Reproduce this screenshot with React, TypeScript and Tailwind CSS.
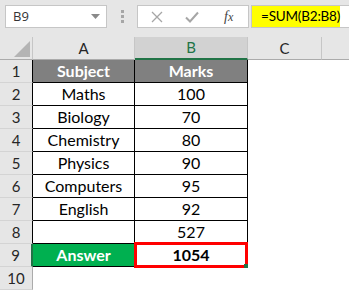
import React from 'react';

const rows = [
    { a: 'Subject', b: 'Marks' },
    { a: 'Maths', b: '100' },
    { a: 'Biology', b: '70' },
    { a: 'Chemistry', b: '80' },
    { a: 'Physics', b: '90' },
    { a: 'Computers', b: '95' },
    { a: 'English', b: '92' },
    { a: '', b: '527' },
    { a: 'Answer', b: '1054' },
];

const rowHead = 'h-[23px] flex items-center justify-center text-[15px] text-[#262626] bg-[#e6e6e6] border-b border-b-[#d4d4d4]';

const App: React.FC = () => {
    return (
        <div className="w-[349px] h-[290px] overflow-hidden bg-[#e6e6e6] font-['Lato',sans-serif]">
            {/* Name box + formula bar */}
            <div className="h-[37px] flex items-start pt-[5px]">
                <div className="ml-[5px] w-[102px] h-[23px] bg-white border border-[#c6c6c6] flex items-center justify-between pl-[7px] pr-[6px]">
                    <span className="text-[13px] text-[#333] font-['Open_Sans',sans-serif]">B9</span>
                    <svg width="9" height="5" viewBox="0 0 9 5"><path d="M0 0h9L4.5 5z" fill="#8a8a8a" /></svg>
                </div>
                <div className="w-[30px] h-[23px] flex flex-col items-center justify-center gap-[2px]">
                    <span className="w-[3px] h-[3px] bg-[#a6a6a6]" />
                    <span className="w-[3px] h-[3px] bg-[#a6a6a6]" />
                    <span className="w-[3px] h-[3px] bg-[#a6a6a6]" />
                </div>
                <div className="w-[112px] h-[23px] bg-white border border-[#c6c6c6] flex items-center">
                    <svg width="12" height="12" viewBox="0 0 12 12" className="ml-[13px]"><path d="M1 1l10 10M11 1L1 11" stroke="#a6a6a6" strokeWidth="1.3" /></svg>
                    <svg width="14" height="12" viewBox="0 0 14 12" className="ml-[22px]"><path d="M1 6.5l4 4L13 1.5" stroke="#a6a6a6" strokeWidth="2" fill="none" /></svg>
                    <span className="ml-[25px] text-[14px] italic text-[#444] font-['Liberation_Serif',serif] leading-none">f<span className="text-[12px]">x</span></span>
                </div>
                <div className="ml-[2px] flex-1 h-[23px] bg-white border-y border-l border-[#c6c6c6] flex">
                    <div className="w-[88px] h-full bg-[#ffff00] flex items-center pl-[9px] text-[13.5px] tracking-[-0.2px] whitespace-nowrap text-black">=SUM(B2:B8)</div>
                </div>
            </div>

            {/* Sheet */}
            <div className="grid grid-cols-[33px_102px_113px_74px_1fr]">
                {/* Column headers */}
                <div className="h-[23px] bg-[#e6e6e6] border-r border-r-[#c6c6c6] border-b border-b-[#ababab] flex items-end justify-end pr-[2px] pb-[2px]">
                    <svg width="16" height="16" viewBox="0 0 16 16"><path d="M16 0V16H0z" fill="#b4b4b4" /></svg>
                </div>
                <div className="h-[23px] bg-[#e6e6e6] border-r border-r-[#c6c6c6] border-b border-b-[#ababab] flex items-center justify-center text-[15px] text-[#262626]">A</div>
                <div className="h-[23px] bg-[#d2d2d2] border-r border-r-[#c6c6c6] border-b-2 border-b-[#217346] flex items-center justify-center text-[15px] text-[#217346]">B</div>
                <div className="h-[23px] bg-[#e6e6e6] border-r border-r-[#c6c6c6] border-b border-b-[#ababab] flex items-center justify-center text-[15px] text-[#262626]">C</div>
                <div className="h-[23px] bg-[#e6e6e6] border-b border-b-[#ababab]" />

                {rows.map((r, i) => {
                    const n = i + 1;
                    const head = n === 1;
                    const answer = n === 9;
                    return (
                        <React.Fragment key={n}>
                            <div className={answer
                                ? `${rowHead} bg-[#d2d2d2] text-[#3f6f55] border-r-2 border-r-[#217346]`
                                : `${rowHead} border-r border-r-black`}>{n}</div>
                            <div className={`h-[23px] flex items-center justify-center text-[16px] border-r border-b border-black ${head ? 'bg-[#808080] text-white font-bold' : answer ? 'bg-[#00b050] text-white font-bold' : 'bg-white text-black'}`}>{r.a}</div>
                            <div className={`relative h-[23px] flex items-center justify-center text-[16px] border-r border-b border-black ${head ? 'bg-[#808080] text-white font-bold' : answer ? 'bg-white text-black font-bold' : 'bg-white text-black'}`}>
                                {r.b}
                                {answer && (
                                    <>
                                        <div className="absolute -left-[1px] -top-[2px] -right-[1px] -bottom-[2px] border-[3px] border-[#ff0000]" />
                                        <div className="absolute -right-[1px] -bottom-[2px] w-[4px] h-[4px] bg-[#217346]" />
                                    </>
                                )}
                            </div>
                            <div className="h-[23px] bg-white" />
                            <div className="h-[23px] bg-white" />
                        </React.Fragment>
                    );
                })}

                {/* Row 10 */}
                <div className={`${rowHead} border-r border-r-[#ababab]`}>10</div>
                <div className="h-[23px] bg-white" />
                <div className="h-[23px] bg-white" />
                <div className="h-[23px] bg-white" />
                <div className="h-[23px] bg-white" />
            </div>
        </div>
    );
};

export default App;
